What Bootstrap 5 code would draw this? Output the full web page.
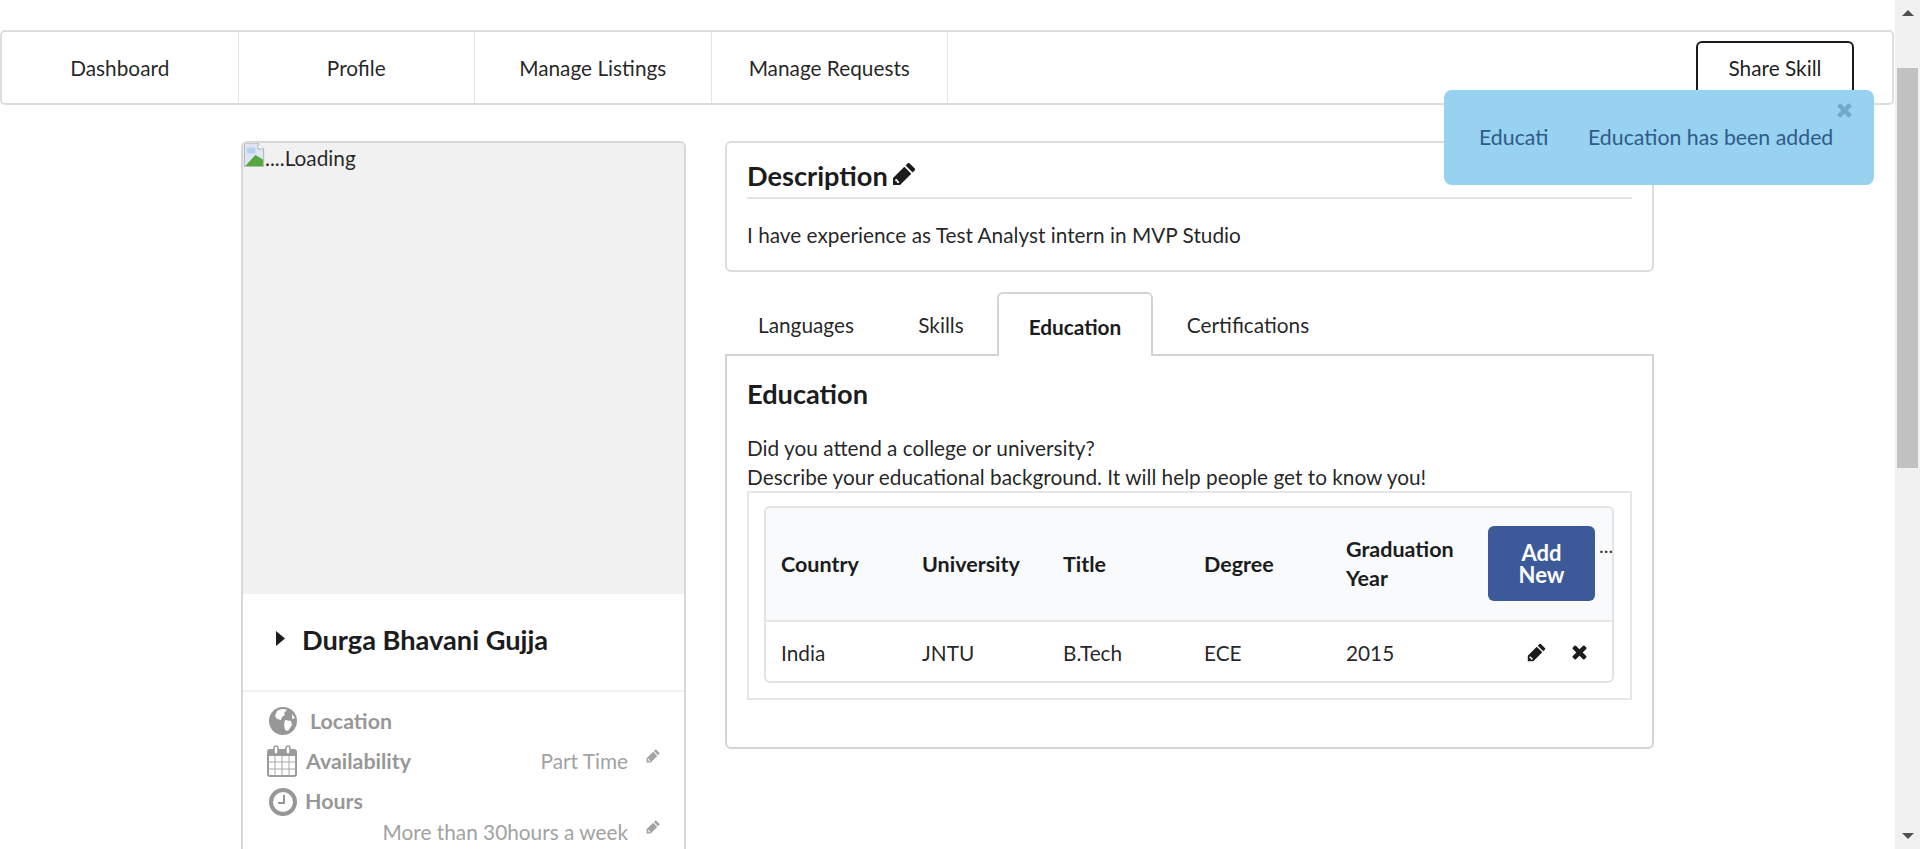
<!DOCTYPE html>
<html lang="en">
<head>
<meta charset="utf-8">
<title>Profile</title>
<link href="https://cdn.jsdelivr.net/npm/bootstrap@5.3.0/dist/css/bootstrap.min.css" rel="stylesheet">
<style>
html,body{height:849px;overflow:hidden}
body{font-family:"Lato","Liberation Sans",sans-serif;font-size:20.8px;line-height:1.43;color:rgba(0,0,0,.87);background:#fff}
.pg{width:1895px;padding-top:30px}
.topbar{height:75px;margin:0 1px 0 0;border:2px solid #ddd;border-radius:5px;align-items:stretch}
.topitem{width:236.5px;border-right:1px solid #e4e4e4;display:flex;align-items:center;justify-content:center;color:rgba(0,0,0,.87);text-decoration:none}
.sharebtn{width:158px;height:54px;margin:9px 38px 0 0;border:2px solid #1b1c1d;border-radius:6px;background:#fff;color:rgba(0,0,0,.9);font-size:20.8px;padding:0}
.cols{width:1413px;margin:36px auto 0;gap:39px;align-items:flex-start}
.leftcol{width:445px;flex:none;border:2px solid #d8d8d8;border-bottom:0;border-radius:6px 6px 0 0;overflow:hidden}
.imgbox{height:451px;background:#f1f1f1;line-height:29px;color:rgba(0,0,0,.85);display:flex;align-items:flex-start}
.imgbox svg{flex:none}
.namebox{height:98px;border-bottom:2px solid #f0f0f0;padding:0 0 4px 33px;gap:17px;font-size:27.2px;font-weight:700;color:#1b1c1d}
.meta{color:#979797;padding:9px 24px 0 24px;height:170px}
.metarow{display:flex;align-items:center;height:40px}
.metarow b{font-weight:700;font-size:21.4px;color:#979797}
.metaval{margin-left:auto;font-weight:400;color:#a2a2a2}
.editsm{margin:-10px 0 0 18px;width:14px;height:14px;flex:none}
.rightcol{width:929px;flex:none}
.desc{border:2px solid #ddd;border-radius:6px;height:131px;padding:0 20px}
.desc h3,.edu h3{font-size:27.2px;font-weight:700;color:#1b1c1d;line-height:1;margin:0}
.deschead{height:56px;padding-top:19px;border-bottom:2px solid #e4e4e4;display:flex;align-items:flex-start;gap:4px}
.desctext{margin-top:21px}
.tabsrow{margin-top:20px;border:0;padding-left:0;height:62px;align-items:flex-end}
.tabsrow .nav-link{border:0;border-radius:6px 6px 0 0;color:rgba(0,0,0,.87);font-size:20.8px;height:62px;padding:4px 0 0;display:flex;align-items:center;justify-content:center;background:transparent}
.tablang{width:162px}.tabedu{width:156px}.tabcert{width:190px}
.tabsrow .tabskill{width:110px;padding-right:2px}
.tabsrow .tabedu.active{border:2px solid #d4d4d5;border-bottom:0;height:64px;margin-bottom:-2px;background:#fff;font-weight:700;color:#1b1c1d;position:relative;z-index:2}
.edu{border:2px solid #d4d4d5;border-radius:0 0 6px 6px;height:395px;padding:0 20px}
.edu h3{margin-top:24px;margin-bottom:26px}
.edu p{margin:0;line-height:29px}
.eduouter{border:2px solid #e6e6e6;height:209px;padding:13px 16px 13px 15px}
.edutable{border:2px solid #e3e3e3;border-radius:6px;height:177px;overflow:hidden}
.gridhead,.gridrow{display:grid;grid-template-columns:141px 141px 141px 142px 142px 1fr;align-items:center;padding-left:15px}
.gridhead{height:114px;background:#f9fafb;border-bottom:2px solid #e6e6e6;font-weight:700;font-size:21.5px;color:#1b1c1d;line-height:29px}
.gridrow{height:61px}
.addcell{display:flex;align-items:flex-start}
.addbtn{width:107px;height:75px;background:#3c5a9a;border:0;border-radius:6px;color:#fff;font-size:22px;font-weight:700;line-height:22px;padding:0 20px;margin-top:-1px}
.dots{margin:8px 0 0 4px;line-height:20px;font-size:20px;font-weight:400;color:#333}
.rowact{display:flex;gap:25px;padding-left:39px;align-items:center}
.notice{position:fixed;left:1444px;top:90px;width:430px;height:95px;margin:0;padding:0;border:0;border-radius:8px;background:#97d2f0;color:#2f5b88;z-index:20;font-size:21.3px}
.notice-in{padding:33px 0 0 35px;line-height:28px}
.noticeclip{width:109px;white-space:nowrap}
.noticex{position:absolute;left:392px;top:12px}
.sb{position:fixed;right:0;top:0;width:25px;height:849px;background:#f1f1f1}
.sbthumb{position:absolute;left:2px;top:68px;width:21px;height:400px;background:#c1c1c1}
.sbarrow{position:absolute;left:7px;top:10px;width:0;height:0;border-left:6px solid transparent;border-right:6px solid transparent;border-bottom:6px solid #505050}
.sbarrowd{top:auto;bottom:10px;border-bottom:0;border-top:6px solid #505050}
</style>
</head>
<body>
<svg width="0" height="0" class="position-absolute">
<defs>
<symbol id="pen" viewBox="0 0 24 24"><path d="M17.5 1.2 22.800 6.500a1.300 1.300 0 0 1 0 1.800l-2.200 2.200-7-7 2.200-2.200a1.300 1.300 0 0 1 1.700-.1zM12.300 4.800l7 7L8 23H1v-7zM4.200 16.800l-1 .9v1.600h1.700v1.700h1.500l1-1z" fill="currentColor" fill-rule="evenodd"/></symbol>
<symbol id="cross" viewBox="0 0 24 24"><path d="M7 2.500 12 7.500 17 2.500a1.500 1.500 0 0 1 2.100 0l2.400 2.400a1.500 1.500 0 0 1 0 2.100L16.500 12l5 5a1.500 1.500 0 0 1 0 2.100l-2.400 2.400a1.500 1.500 0 0 1-2.100 0l-5-5-5 5a1.500 1.500 0 0 1-2.100 0l-2.400-2.400a1.500 1.500 0 0 1 0-2.100l5-5-5-5a1.500 1.500 0 0 1 0-2.100l2.400-2.400a1.500 1.500 0 0 1 2.100 0z" fill="currentColor"/></symbol>
</defs>
</svg>
<div class="pg">
  <nav class="topbar d-flex">
    <a class="topitem" href="#">Dashboard</a>
    <a class="topitem" href="#">Profile</a>
    <a class="topitem" href="#">Manage Listings</a>
    <a class="topitem" href="#">Manage Requests</a>
    <button class="btn sharebtn ms-auto" type="button">Share Skill</button>
  </nav>
  <div class="cols d-flex">
    <aside class="leftcol">
      <div class="imgbox"><svg width="22" height="24" viewBox="0 0 16 16" preserveAspectRatio="none"><path d="M1 0h10l4 4v12H1z" fill="#dfe6f2" stroke="#a9a9a9" stroke-width=".6"/><path d="M11 0v4h4" fill="#fff" stroke="#a9a9a9" stroke-width=".6"/><path d="M1.500 15.500 9 8l5.500 3v4.500z" fill="#57a63f"/><path d="M3 3h6v4H3z" fill="#b9d0f2"/></svg><span>....Loading</span></div>
      <div class="namebox d-flex align-items-center">
        <svg width="9" height="15" viewBox="0 0 9 15" class="mb-1"><path d="M0 0 9 7.500 0 15z" fill="#1b1c1d"/></svg>
        <span>Durga Bhavani Gujja</span>
      </div>
      <div class="meta">
        <div class="metarow"><svg width="28" height="28" viewBox="0 0 28 28" style="margin:0 13px 0 2px"><circle cx="14" cy="14" r="14" fill="#979797"/><path d="M8 4c3-2 7-3 10-1l-3 3 1 2-3 2-1 3-4-1-2-3zM16 13l6 1 1 4-4 6-3-1-1-5zM23 7l3 4-3 1z" fill="#fff"/></svg><b>Location</b></div>
        <div class="metarow"><svg width="30" height="32" viewBox="0 0 30 32" style="margin-right:9px"><rect x="1" y="5" width="28" height="26" rx="2" fill="none" stroke="#9b9b9b" stroke-width="2"/><rect x="1" y="5" width="28" height="6" fill="#9b9b9b"/><rect x="7" y="1" width="4" height="8" rx="2" fill="#fff" stroke="#9b9b9b" stroke-width="1.500"/><rect x="19" y="1" width="4" height="8" rx="2" fill="#fff" stroke="#9b9b9b" stroke-width="1.500"/><path d="M1 17h28M1 24h28M8 11v20M15 11v20M22 11v20" stroke="#a8a8a8"/></svg><b>Availability</b><span class="metaval">Part Time</span><svg class="editsm" style="color:#a2a2a2"><use href="#pen"/></svg></div>
        <div class="metarow" style="height:41px"><svg width="28" height="28" viewBox="0 0 28 28" style="margin:0 8px 0 2px"><circle cx="14" cy="14" r="12" fill="none" stroke="#979797" stroke-width="4"/><path d="M15 7v8H9" fill="none" stroke="#979797" stroke-width="2"/></svg><b>Hours</b></div>
        <div class="metarow" style="height:20px"><span class="metaval">More than 30hours a week</span><svg class="editsm" style="color:#a2a2a2"><use href="#pen"/></svg></div>
      </div>
    </aside>
    <main class="rightcol">
      <section class="desc">
        <div class="deschead"><h3>Description</h3><svg width="24" height="24" style="color:#1b1c1d"><use href="#pen"/></svg></div>
        <div class="desctext">I have experience as Test Analyst intern in MVP Studio</div>
      </section>
      <ul class="nav tabsrow">
        <li class="nav-item"><a class="nav-link tablang" href="#">Languages</a></li>
        <li class="nav-item"><a class="nav-link tabskill" href="#">Skills</a></li>
        <li class="nav-item"><a class="nav-link tabedu active" href="#">Education</a></li>
        <li class="nav-item"><a class="nav-link tabcert" href="#">Certifications</a></li>
      </ul>
      <section class="edu">
        <h3>Education</h3>
        <p>Did you attend a college or university?<br>Describe your educational background. It will help people get to know you!</p>
        <div class="eduouter">
          <div class="edutable">
            <div class="gridhead">
              <div>Country</div><div>University</div><div>Title</div><div>Degree</div><div>Graduation Year</div>
              <div class="addcell"><button class="btn addbtn" type="button">Add New</button><span class="dots">...</span></div>
            </div>
            <div class="gridrow">
              <div>India</div><div>JNTU</div><div>B.Tech</div><div>ECE</div><div>2015</div>
              <div class="rowact"><svg width="19" height="19" style="color:#1b1c1d"><use href="#pen"/></svg><svg width="17" height="17" style="color:#1b1c1d"><use href="#cross"/></svg></div>
            </div>
          </div>
        </div>
      </section>
    </main>
  </div>
</div>
<div class="alert notice" role="alert">
  <div class="notice-in d-flex"><span class="noticeclip">Educati</span><span>Education has been added</span></div>
  <svg class="noticex" width="17" height="17" style="color:#6fa9cb"><use href="#cross"/></svg>
</div>
<div class="sb"><div class="sbarrow"></div><div class="sbthumb"></div><div class="sbarrow sbarrowd"></div></div>
<script src="https://cdn.jsdelivr.net/npm/bootstrap@5.3.0/dist/js/bootstrap.bundle.min.js"></script>
</body>
</html>
